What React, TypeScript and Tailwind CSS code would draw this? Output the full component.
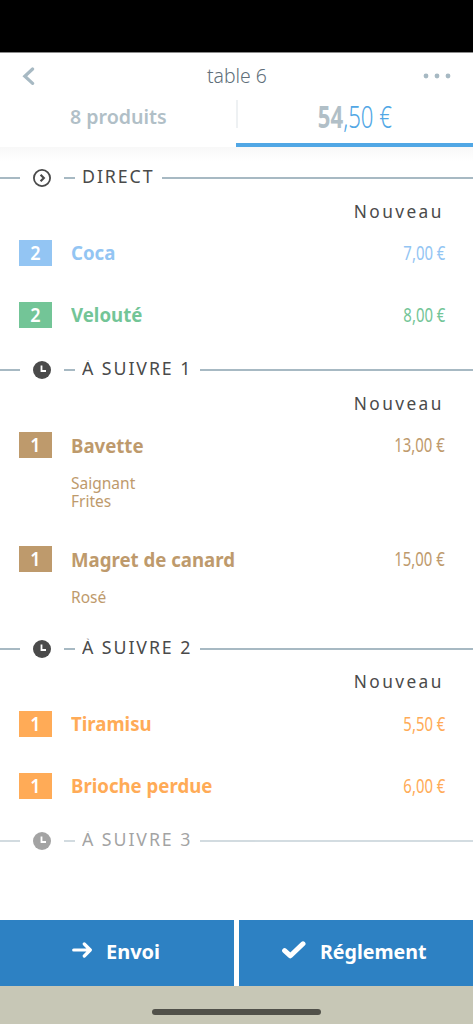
import React from 'react';

type Item = { qty: number; name: string; price: string; options?: string[]; tone: string; badge: string };
type Course = { title: string; direct?: boolean; items: Item[] };

const BLUE = { tone: 'text-[#93c5f3]', badge: 'bg-[#93c5f3]' };
const GREEN = { tone: 'text-[#73c597]', badge: 'bg-[#73c597]' };
const BROWN = { tone: 'text-[#be9a6c]', badge: 'bg-[#be9a6c]' };
const ORANGE = { tone: 'text-[#ffab57]', badge: 'bg-[#ffab57]' };

const courses: Course[] = [
  {
    title: 'DIRECT',
    direct: true,
    items: [
      { qty: 2, name: 'Coca', price: '7,00 €', ...BLUE },
      { qty: 2, name: 'Velouté', price: '8,00 €', ...GREEN },
    ],
  },
  {
    title: 'À SUIVRE 1',
    items: [
      { qty: 1, name: 'Bavette', price: '13,00 €', options: ['Saignant', 'Frites'], ...BROWN },
      { qty: 1, name: 'Magret de canard', price: '15,00 €', options: ['Rosé'], ...BROWN },
    ],
  },
  {
    title: 'À SUIVRE 2',
    items: [
      { qty: 1, name: 'Tiramisu', price: '5,50 €', ...ORANGE },
      { qty: 1, name: 'Brioche perdue', price: '6,00 €', ...ORANGE },
    ],
  },
  { title: 'À SUIVRE 3', items: [] },
];

const DirectIcon = () => (
  <svg width="18" height="18" viewBox="0 0 18 18" fill="none" stroke="#4a4a4a" className="shrink-0">
    <circle cx="9" cy="9" r="8.1" strokeWidth="1.8" />
    <path d="M7.6 5.8 L10.8 9 L7.6 12.2" strokeWidth="2.2" />
  </svg>
);

const ClockIcon = () => (
  <svg width="18" height="18" viewBox="0 0 18 18" fill="none" className="shrink-0">
    <circle cx="9" cy="9" r="9" fill="#4a4a4a" />
    <path d="M8.5 4.4 V10 H13" stroke="#fff" strokeWidth="1.8" />
  </svg>
);

const CourseHeader = ({ title, direct, muted }: { title: string; direct?: boolean; muted: boolean }) => (
  <div className={`flex h-[34px] items-center ${muted ? 'opacity-50' : ''}`}>
    <div className="h-0.5 w-5 bg-[#a7b9c3]"></div>
    <div className="ml-[13px] flex">{direct ? <DirectIcon /> : <ClockIcon />}</div>
    <div className="ml-[13px] h-0.5 w-[11px] bg-[#a7b9c3]"></div>
    <div className={`ml-[7px] pb-1 ${direct ? 'w-[80px]' : 'w-[118px] [clip-path:inset(2px_0_0_0)]'}`}>
      <span className="block origin-left scale-x-[0.96] text-[18.5px] leading-5 tracking-[2px] whitespace-nowrap text-[#4a4a4a]">{title}</span>
    </div>
    <div className="h-0.5 flex-1 bg-[#a7b9c3]"></div>
  </div>
);

const ItemRow = ({ item }: { item: Item }) => (
  <div className={`pt-[11px] pr-[28px] pb-[25px] pl-[19px] ${item.tone}`}>
    <div className="flex h-[26px] items-center">
      <div className={`flex h-[26px] w-[33px] items-center justify-center text-[19px] font-semibold text-white ${item.badge}`}>
        <span className="scale-x-[0.95]">{item.qty}</span>
      </div>
      <span className="ml-[19px] origin-left scale-x-[0.98] pt-px text-[19px] font-bold whitespace-nowrap">{item.name}</span>
      <span className="ml-auto origin-right scale-x-[0.745] text-[20px] whitespace-nowrap">{item.price}</span>
    </div>
    {item.options && (
      <div className="mt-4 ml-[52px] text-[16px] leading-[18px]">
        {item.options.map((o) => (
          <div key={o} className="origin-left scale-x-[0.97]">{o}</div>
        ))}
      </div>
    )}
  </div>
);

function App() {
  return (
    <div className="flex h-[1024px] w-[473px] flex-col overflow-hidden bg-white font-['Noto_Sans',sans-serif]">
      <div className="h-[53px] shrink-0 border-b border-[#8b8b8b] bg-black"></div>

      {/* Title bar */}
      <header className="shrink-0">
        <div className="flex h-[47px] items-center justify-between pr-[22px] pb-px pl-[22px]">
          <svg width="29" height="18" viewBox="0 0 29 18" fill="none" stroke="#a7b9c3" strokeWidth="3.2" className="shrink-0">
            <path d="M10.6 2 L2.8 9.2 L10.6 16.4" strokeLinecap="round" />
          </svg>
          <span className="scale-x-[0.97] pb-px text-[20px] font-light text-[#5f6f7a]">table 6</span>
          <svg width="28" height="6" viewBox="0 0 28 6" fill="#a7b9c3" className="shrink-0">
            <circle cx="3" cy="3" r="2.4" />
            <circle cx="14" cy="3" r="2.4" />
            <circle cx="25" cy="3" r="2.4" />
          </svg>
        </div>
        <div className="flex h-[47px]">
          <div className="flex w-[236px] justify-center">
            <span className="mt-[3px] scale-x-[0.98] text-[20px] leading-7 font-semibold text-[#b1bfc7]">8 produits</span>
          </div>
          <div className="flex flex-1 flex-col border-b-4 border-[#51a7e5]">
            <div className="flex h-7 justify-center border-l-2 border-[#eef1f3]">
              <span className="-ml-0.5 scale-x-[0.715] text-[31px] leading-[33px] whitespace-nowrap">
                <b className="text-[#b1bfc7]">54</b>
                <span className="font-light text-[#51a7e5]">,50 €</span>
              </span>
            </div>
          </div>
        </div>
        <div className="h-[14px] bg-linear-to-b from-[#f8f8f8] to-white"></div>
      </header>

      <main className="flex-1">
        {courses.map((c) => (
          <section key={c.title} className="not-first:pt-[0.4px]">
            <CourseHeader title={c.title} direct={c.direct} muted={c.items.length === 0} />
            {c.items.length > 0 && (
              <div className="flex h-[34px] items-center justify-end pr-[29px] pb-[2px]">
                <span className="origin-right scale-x-[0.96] text-[18px] tracking-[2.5px] text-[#4a4a4a]">Nouveau</span>
              </div>
            )}
            {c.items.map((item) => (
              <ItemRow key={item.name} item={item} />
            ))}
          </section>
        ))}
      </main>

      {/* Bottom actions */}
      <footer className="shrink-0">
        <div className="flex h-[66px] gap-[5px] text-[20px] font-bold text-white">
          <button className="flex w-[234px] items-center bg-[#2d81c3] pb-[3px] pl-[72px]">
            <svg width="20" height="16" viewBox="0 0 20 16" fill="none" stroke="#fff" strokeWidth="3.2" strokeLinecap="round" strokeLinejoin="round" className="-mt-[3px]">
              <path d="M1.7 8 H18 M12.3 2 L18.3 8 L12.3 14" />
            </svg>
            <span className="ml-[14px] origin-left">Envoi</span>
          </button>
          <button className="flex flex-1 items-center bg-[#2d81c3] pb-[3px] pl-[43px]">
            <svg width="24" height="18" viewBox="0 0 24 18" fill="none" stroke="#fff" strokeWidth="5" strokeLinecap="round" strokeLinejoin="round" className="-mt-[3px]">
              <path d="M2.6 9.6 L8.4 14.8 L21 2.8" />
            </svg>
            <span className="ml-[14px] origin-left scale-x-[0.98]">Réglement</span>
          </button>
        </div>
        <div className="flex h-[38px] justify-center bg-[#c7c7b6] pt-[23px]">
          <div className="h-1.5 w-[169px] rounded-full bg-[#51514a]"></div>
        </div>
      </footer>
    </div>
  );
}

export default App;
